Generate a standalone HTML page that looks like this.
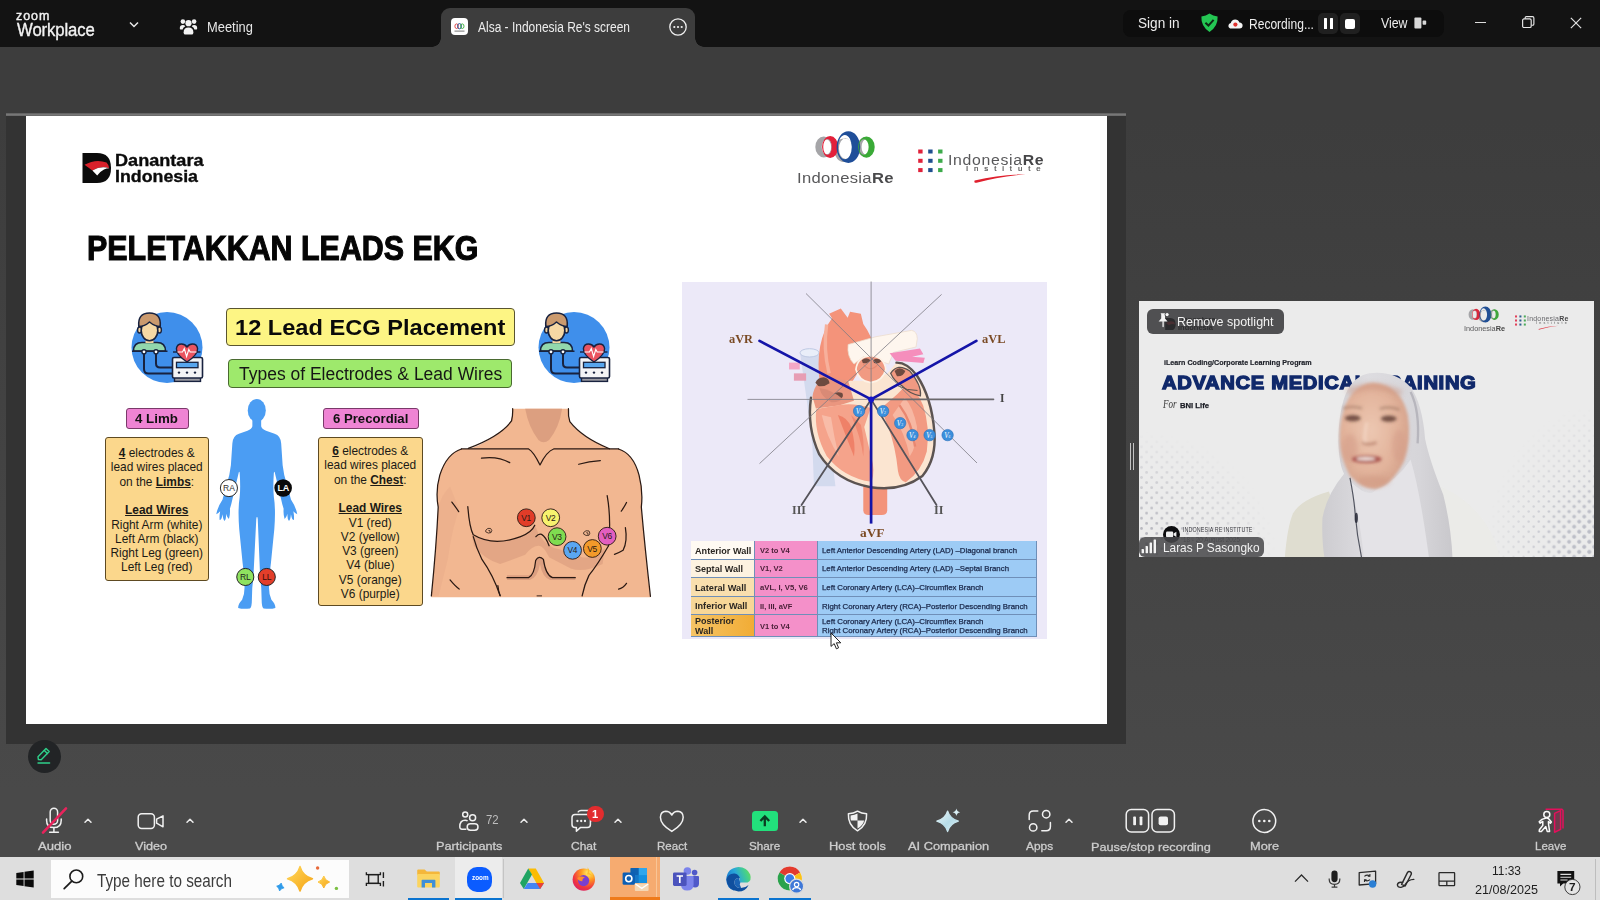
<!DOCTYPE html>
<html>
<head>
<meta charset="utf-8">
<title>Zoom Workplace</title>
<style>
*{box-sizing:border-box;margin:0;padding:0}
html,body{width:1600px;height:900px;overflow:hidden;background:#3d3d3d;font-family:"Liberation Sans",sans-serif;}
#root{filter:opacity(1);position:relative;width:1600px;height:900px;overflow:hidden;background:linear-gradient(#3d3d3d 0,#3d3d3d 120px,#494949 790px,#494949 100%);}
.abs{position:absolute}
/* ---------- title bar ---------- */
#titlebar{position:absolute;left:0;top:0;width:1600px;height:47px;background:#131313;color:#fff}
.t{position:absolute;white-space:nowrap;transform:scaleX(var(--k,1));transform-origin:0 50%}
#titlebar .t{color:#f2f2f2}
#tab{position:absolute;left:441px;top:8px;width:254px;height:39px;background:#3d3d3d;border-radius:9px 9px 0 0}
#tab:before,#tab:after{content:"";position:absolute;bottom:0;width:9px;height:9px}
#tab:before{left:-9px;background:radial-gradient(circle at 0 0,transparent 8.5px,#3d3d3d 9px)}
#tab:after{right:-9px;background:radial-gradient(circle at 100% 0,transparent 8.5px,#3d3d3d 9px)}
#pill{position:absolute;left:1123px;top:10px;width:321px;height:27px;border-radius:8px;background:#0d0d0d}
/* ---------- share area ---------- */
#share{position:absolute;left:6px;top:113px;width:1120px;height:631px;background:#333}
#share .topline{position:absolute;left:0;top:0;width:1120px;height:3px;background:linear-gradient(#5a5a5a,#777 50%,#666)}
#slide{position:absolute;left:20px;top:3px;width:1081px;height:608px;background:#fff;overflow:hidden}
.ob{background:#fbd78c;border:1.2px solid #5e4a22;border-radius:3px}
.otx{font-size:11.9px;line-height:14.3px;text-align:center;color:#1c1a16;white-space:nowrap}
.otx b{font-weight:bold}
.ll{font-family:"Liberation Serif",serif;font-weight:bold;font-size:11.6px;line-height:16px;color:#7a4a24}
.tc1{font-size:9.6px;line-height:12px;font-weight:bold;color:#2a2622}
.tc2{font-size:7.2px;line-height:12px;font-weight:bold;color:#4a2038}
.tc3{font-size:7.2px;line-height:12px;color:#1c2a4c;-webkit-text-stroke:.25px #1c2a4c}
/* ---------- video ---------- */
#video{position:absolute;left:1139px;top:301px;width:455px;height:256px;background:#ebebeb;overflow:hidden}
/* ---------- toolbar ---------- */
#toolbar{position:absolute;left:0;top:790px;width:1600px;height:67px}
.tb{position:absolute;top:0;height:67px;color:#d6d6d6;font-size:13px;text-align:center}
.tb .lbl{position:absolute;left:50%;transform:translateX(-50%);top:47px;white-space:nowrap;color:#d2d2d2;font-size:13.5px;letter-spacing:.1px}
.tb svg{position:absolute}
.lb{font-size:11.7px;line-height:14px;color:#cdcdcd;-webkit-text-stroke:.3px #cdcdcd}
/* ---------- taskbar ---------- */
#taskbar{position:absolute;left:0;top:857px;width:1600px;height:43px;background:#dedede}
</style>
</head>
<body>
<div id="root">

<!-- TITLEBAR -->
<div id="titlebar">
  <div class="t" style="left:16px;top:8.5px;font-size:12px;letter-spacing:.9px;line-height:14px;-webkit-text-stroke:.4px #f2f2f2;--k:1.04">zoom</div>
  <div class="t" style="left:16.5px;top:19.5px;font-size:17.5px;line-height:20px;letter-spacing:-.1px;-webkit-text-stroke:.35px #f2f2f2;--k:.955">Workplace</div>
  <svg class="abs" style="left:128px;top:20px" width="12" height="10" viewBox="0 0 12 10"><path d="M2 2.5 L6 6.5 L10 2.5" fill="none" stroke="#e8e8e8" stroke-width="1.5"/></svg>
  <!-- meeting icon -->
  <svg class="abs" style="left:179px;top:17px" width="19" height="19" viewBox="0 0 19 19"><g fill="#f2f2f2"><circle cx="9.5" cy="6.2" r="3.1"/><circle cx="3.9" cy="4.6" r="2.3"/><circle cx="15.1" cy="4.6" r="2.3"/><path d="M0.8 11.2 Q0.8 8 3.9 8 Q5.5 8 6.3 9.2 Q3.8 10.3 3.6 12.6 L1.6 12.6 Q0.8 12.6 0.8 11.2Z"/><path d="M18.2 11.2 Q18.2 8 15.1 8 Q13.5 8 12.7 9.2 Q15.2 10.3 15.4 12.6 L17.4 12.6 Q18.2 12.6 18.2 11.2Z"/><path d="M4.6 15.4 Q4.6 10.4 9.5 10.4 Q14.4 10.4 14.4 15.4 Q14.4 17.6 12.6 17.6 L6.4 17.6 Q4.6 17.6 4.6 15.4Z"/></g></svg>
  <div class="t" style="left:207px;top:18px;font-size:14px;line-height:18px;color:#e6e6e6;--k:.92">Meeting</div>
  <div id="tab">
    <div class="abs" style="left:10px;top:10px;width:17px;height:17px;border-radius:4px;background:#fff"></div>
    <svg class="abs" style="left:10px;top:10px" width="17" height="17" viewBox="0 0 17 17"><ellipse cx="5.6" cy="8.2" rx="1.7" ry="2.3" fill="none" stroke="#d33" stroke-width=".9"/><ellipse cx="8.5" cy="8.2" rx="1.9" ry="2.6" fill="none" stroke="#25509a" stroke-width="1"/><ellipse cx="11.3" cy="8.2" rx="1.7" ry="2.3" fill="none" stroke="#3a3" stroke-width=".9"/><rect x="3.5" y="12.6" width="10" height="1" fill="#777"/></svg>
    <div class="t" style="left:37px;top:10px;font-size:14px;line-height:18px;color:#ededed;--k:.855">Alsa - Indonesia Re's screen</div>
    <svg class="abs" style="left:227px;top:9px" width="20" height="20" viewBox="0 0 20 20"><circle cx="10" cy="10" r="8.2" fill="none" stroke="#f0f0f0" stroke-width="1.3"/><circle cx="6.3" cy="10" r="1.1" fill="#f0f0f0"/><circle cx="10" cy="10" r="1.1" fill="#f0f0f0"/><circle cx="13.7" cy="10" r="1.1" fill="#f0f0f0"/></svg>
  </div>
  <div id="pill">
    <div class="t" style="left:15px;top:4px;font-size:15px;line-height:18px;color:#ededed;--k:.906">Sign in</div>
    <svg class="abs" style="left:77px;top:3px" width="19" height="20" viewBox="0 0 19 20"><path d="M9.5 .6 Q13 3 17.6 3.6 Q18.2 13.5 9.5 19 Q.8 13.5 1.4 3.6 Q6 3 9.5 .6Z" fill="#24c653"/><path d="M5.4 9.8 L8.4 12.6 L13.6 6.8" fill="none" stroke="#0e2a15" stroke-width="2"/></svg>
    <svg class="abs" style="left:105px;top:9px" width="15" height="10" viewBox="0 0 15 10"><path d="M3.6 9.6 Q.4 9.6 .4 6.8 Q.4 4.4 2.8 4 Q3.6 .4 7.2 .4 Q10.4 .4 11.4 3.4 Q14.6 3.6 14.6 6.6 Q14.6 9.6 11.4 9.6Z" fill="#f4f4f4"/><circle cx="7.4" cy="5.6" r="2.1" fill="#e0332f"/></svg>
    <div class="t" style="left:125.5px;top:5px;font-size:14px;line-height:18px;color:#ededed;--k:.86">Recording...</div>
    <div class="abs" style="left:195px;top:3px;width:20px;height:21px;border-radius:5px;background:#202020"></div>
    <div class="abs" style="left:217px;top:3px;width:20px;height:21px;border-radius:5px;background:#202020"></div>
    <div class="abs" style="left:201px;top:8px;width:3px;height:11px;background:#fff;border-radius:.5px"></div>
    <div class="abs" style="left:206.5px;top:8px;width:3px;height:11px;background:#fff;border-radius:.5px"></div>
    <div class="abs" style="left:221.5px;top:8.5px;width:10.5px;height:10px;background:#fff;border-radius:2px"></div>
    <div class="t" style="left:257.5px;top:4px;font-size:14px;line-height:18px;color:#ededed;--k:.88">View</div>
    <svg class="abs" style="left:291px;top:7px" width="13" height="12" viewBox="0 0 13 12"><rect x=".4" y=".4" width="7" height="11" rx="1" fill="#d8d8d8"/><rect x="8.6" y="3.6" width="3.6" height="4.2" rx=".8" fill="#d8d8d8"/></svg>
  </div>
  <!-- window controls -->
  <div class="abs" style="left:1474.5px;top:22px;width:11.5px;height:1.2px;background:#dcdcdc"></div>
  <svg class="abs" style="left:1522px;top:16px" width="12.5" height="12.5" viewBox="0 0 14 14"><rect x=".7" y="3.3" width="9.6" height="9.6" rx="1.5" fill="none" stroke="#e8e8e8" stroke-width="1.3"/><path d="M3.6 3.2 V2.2 Q3.6 .7 5.1 .7 H11.8 Q13.3 .7 13.3 2.2 V8.9 Q13.3 10.4 11.8 10.4 H10.6" fill="none" stroke="#e8e8e8" stroke-width="1.3"/></svg>
  <svg class="abs" style="left:1570px;top:16.5px" width="12" height="12" viewBox="0 0 14 14"><path d="M1 1 L13 13 M13 1 L1 13" stroke="#e0e0e0" stroke-width="1.4"/></svg>
</div>

<!-- SHARE -->
<div id="share">
  <div class="topline"></div>
  <div id="slide"><div id="pg" style="position:absolute;left:-26px;top:-116px;width:1600px;height:900px">

<!-- Danantara logo -->
<svg class="abs" style="left:82px;top:153px" width="30" height="30" viewBox="0 0 30 30"><path d="M.5 0 H15 Q29 0 29 15 Q29 30 15 30 H.5Z" fill="#0b0b0b"/><path d="M2.5 11.8 Q14 5.5 24.5 9.6 Q26.8 11.8 27.2 15.2 Q19 12.4 10.4 17.4Z" fill="#d8202a"/><path d="M10.4 17.4 Q19 12.4 27.2 15.2 Q24.5 15.3 22 16.4 Q18 18.4 15.2 22.4Z" fill="#fff"/></svg>
<div class="t s" style="left:114.5px;top:150.7px;font-size:17px;line-height:20px;font-weight:bold;color:#0b0b0b;-webkit-text-stroke:.35px #0b0b0b;--w:88.5;--k:1.0645">Danantara</div>
<div class="t s" style="left:114.5px;top:166.9px;font-size:17px;line-height:20px;font-weight:bold;color:#0b0b0b;-webkit-text-stroke:.35px #0b0b0b;--w:83;--k:1.0459">Indonesia</div>
<!-- title -->
<div class="t s" id="ttl" style="left:87.2px;top:228.3px;font-size:35px;line-height:40px;font-weight:bold;color:#050505;-webkit-text-stroke:1.1px #050505;--w:391.5;--k:0.8690">PELETAKKAN LEADS EKG</div>
<!-- yellow & green boxes -->
<div class="abs" style="left:225.5px;top:307.5px;width:289px;height:38px;background:#fdf584;border:1.2px solid #5a5530;border-radius:4px"></div>
<div class="t s" style="left:234.5px;top:314.3px;font-size:22.5px;line-height:28px;font-weight:bold;color:#0a0a0a;--w:270.3;--k:1.0493">12 Lead ECG Placement</div>
<div class="abs" style="left:228px;top:359px;width:283.5px;height:28.5px;background:#9ee96c;border:1.2px solid #4a6a30;border-radius:4px"></div>
<div class="t s" style="left:238.5px;top:363px;font-size:18px;line-height:22px;color:#161616;--w:263.3;--k:0.9711">Types of Electrodes &amp; Lead Wires</div>
<!-- monitor icons -->
<svg width="0" height="0" style="position:absolute"><defs><g id="ecgico">
<circle cx="42" cy="47.5" r="35.5" fill="#3f8feb"/>
<path d="M8.5 51 Q8.5 42.5 17 42.5 H32 Q40.5 42.5 40.5 51Z" fill="#92d8ac" stroke="#18223f" stroke-width="1.6" stroke-linejoin="round"/>
<path d="M7 51.3 H42.5" stroke="#18223f" stroke-width="1.6"/>
<path d="M20.5 38 V43 H28.5 V38Z" fill="#f3d4a0"/>
<ellipse cx="14.6" cy="30" rx="2" ry="3" fill="#f3d4a0" stroke="#18223f" stroke-width="1.4"/><ellipse cx="34.4" cy="30" rx="2" ry="3" fill="#f3d4a0" stroke="#18223f" stroke-width="1.4"/>
<ellipse cx="24.5" cy="30.5" rx="8.3" ry="10.3" fill="#f6d8a4" stroke="#18223f" stroke-width="1.6"/>
<path d="M13.8 26.5 Q12.5 13 24.5 13 Q36.5 13 35.2 26.5 Q30 26.5 24.5 22 Q19.5 26.5 13.8 26.5Z" fill="#cb9a6e" stroke="#18223f" stroke-width="1.6" stroke-linejoin="round"/>
<path d="M19 53 V69 Q19 73.5 23.5 73.5 H48" fill="none" stroke="#18223f" stroke-width="2"/>
<path d="M31 53 V63.5 Q31 67.5 35 67.5 H48" fill="none" stroke="#18223f" stroke-width="2"/>
<circle cx="19" cy="51.8" r="2.1" fill="#fff" stroke="#18223f" stroke-width="1.4"/><circle cx="31" cy="51.8" r="2.1" fill="#fff" stroke="#18223f" stroke-width="1.4"/>
<rect x="49.5" y="77" width="26" height="4.4" fill="#9a9aa2" stroke="#18223f" stroke-width="1.4"/>
<rect x="47.5" y="57.5" width="30" height="20.5" rx="1.5" fill="#f4f4f6" stroke="#18223f" stroke-width="1.6"/>
<rect x="51.5" y="62.3" width="21.5" height="5.4" fill="#58a6ee" stroke="#18223f" stroke-width="1.3"/>
<circle cx="54" cy="72.6" r="1.2" fill="#18223f"/><circle cx="62" cy="72.6" r="1.2" fill="#18223f"/><circle cx="70" cy="72.6" r="1.2" fill="#18223f"/>
<path d="M48 52 H75.5" stroke="#18223f" stroke-width="1.4"/>
<path d="M62 62 Q51 54.5 51.4 48.6 Q52 44 56.5 44 Q60 44 62 47 Q64 44 67.5 44 Q72 44 72.6 48.6 Q73 54.5 62 62Z" fill="#ea5460" stroke="#18223f" stroke-width="1.4" stroke-linejoin="round"/>
<path d="M52.5 52 H57.5 L59.3 48.5 L61.6 56.5 L63.8 49.5 L65.2 52 H71.5" fill="none" stroke="#fff" stroke-width="1.1"/>
</g></defs></svg>
<svg class="abs" style="left:125px;top:300px" width="90" height="90" viewBox="0 0 90 90"><use href="#ecgico"/></svg>
<svg class="abs" style="left:531.5px;top:300px" width="90" height="90" viewBox="0 0 90 90"><use href="#ecgico"/></svg>
<!-- pink labels -->
<div class="abs" style="left:125.5px;top:407.5px;width:63px;height:21.5px;background:#ef84d4;border:1px solid #7a3a6a;border-radius:3px"></div>
<div class="t s" style="left:135px;top:409.5px;font-size:13.2px;line-height:18px;font-weight:bold;color:#111;--w:42.8;--k:1.0071">4 Limb</div>
<div class="abs" style="left:322.5px;top:407.5px;width:96.5px;height:21.5px;background:#ef84d4;border:1px solid #7a3a6a;border-radius:3px"></div>
<div class="t s" style="left:332.5px;top:409.5px;font-size:13.2px;line-height:18px;font-weight:bold;color:#111;--w:75.3;--k:0.9974">6 Precordial</div>
<!-- orange boxes -->
<div class="abs ob" style="left:104.5px;top:437px;width:104.5px;height:144px"></div>
<div class="abs ob" style="left:318px;top:437px;width:104.5px;height:168.5px"></div>
<div class="abs otx" style="left:104.5px;top:446.1px;width:104.5px"><u><b>4</b></u> electrodes &amp;<br>lead wires placed<br>on the <u><b>Limbs</b></u>:<br><br><u><b>Lead Wires</b></u><br>Right Arm (white)<br>Left Arm (black)<br>Right Leg (green)<br>Left Leg (red)</div>
<div class="abs otx" style="left:318px;top:444.1px;width:104.5px"><u><b>6</b></u> electrodes &amp;<br>lead wires placed<br>on the <u><b>Chest</b></u>:<br><br><u><b>Lead Wires</b></u><br>V1 (red)<br>V2 (yellow)<br>V3 (green)<br>V4 (blue)<br>V5 (orange)<br>V6 (purple)</div>
<svg class="abs" style="left:205px;top:392px" width="105" height="220" viewBox="0 0 430 900">
<g fill="#4b9df3">
<ellipse cx="212" cy="75" rx="37" ry="47"/>
<path d="M194 108 H230 V140 Q232 152 250 158 L285 170 Q310 178 312 210 L318 300 Q322 340 336 380 L352 440 Q372 470 378 500 Q372 500 362 488 Q366 510 364 524 Q356 524 352 500 Q350 522 344 528 Q336 520 338 498 Q332 516 326 520 Q320 500 322 478 Q316 460 312 440 L286 330 Q284 322 282 330 Q278 390 282 430 Q290 480 284 560 Q276 640 270 700 Q262 760 262 800 Q262 830 272 850 Q290 870 288 884 Q270 890 240 886 Q232 880 232 850 Q232 800 226 760 L216 520 Q213 500 210 520 L198 760 Q192 800 192 850 Q192 880 184 886 Q154 890 136 884 Q134 870 152 850 Q162 830 162 800 Q162 760 154 700 Q148 640 140 560 Q134 480 142 430 Q146 390 142 330 Q140 322 138 330 L112 440 Q108 460 102 478 Q104 500 98 520 Q92 516 86 498 Q88 520 80 528 Q74 522 72 500 Q68 524 60 524 Q58 510 62 488 Q52 500 46 500 Q52 470 72 440 L88 380 Q102 340 106 300 L112 210 Q114 178 139 170 L174 158 Q192 152 194 140Z"/>
</g>
<circle cx="98" cy="393" r="35" fill="#fff" stroke="#222" stroke-width="4"/>
<circle cx="320" cy="393" r="36" fill="#0a0a0a"/>
<circle cx="165" cy="757" r="35" fill="#8fe260" stroke="#222" stroke-width="4"/>
<circle cx="253" cy="757" r="35" fill="#e23e2a" stroke="#222" stroke-width="4"/>
<g font-family="Liberation Sans, sans-serif" font-size="35" text-anchor="middle">
<text x="98" y="405" fill="#333">RA</text>
<text x="320" y="405" fill="#fff" font-weight="bold" font-size="37" letter-spacing="-2">LA</text>
<text x="165" y="769" fill="#222" letter-spacing="-1">RL</text>
<text x="253" y="769" fill="#3a0d08" letter-spacing="-1">LL</text>
</g>
</svg>
<svg class="abs" style="left:425px;top:400px" width="235" height="205" viewBox="0 0 1032 900">
<defs><clipPath id="tcl"><rect x="0" y="0" width="1032" height="866"/></clipPath></defs>
<g clip-path="url(#tcl)">
<path id="tbody" d="M385 38 H630 V70 Q632 100 660 125 Q730 185 812 215 H850 Q915 235 940 330 Q958 400 950 470 Q965 640 990 870 L990 900 H25 L28 870 Q50 640 58 470 Q45 400 65 330 Q95 235 160 215 H195 Q280 185 352 125 Q380 100 382 70Z" fill="#f2b791"/>
<path d="M440 38 H602 Q590 120 545 175 Q520 195 498 175 Q455 120 440 38Z" fill="#dc9f80"/>
<path d="M205 590 Q300 640 420 600 Q470 580 482 548 L500 590 Q540 650 590 655 L690 690 Q740 700 790 650 L780 720 Q700 760 640 740 L545 690 Q520 640 500 640 Q470 640 440 680 L330 720 Q260 700 215 640Z" fill="#e0a382" opacity=".85"/>
<path d="M360 770 H455 Q480 760 485 700 Q500 680 520 700 Q530 765 560 775 H660 L660 790 H550 Q515 780 505 720 Q495 780 460 790 H360Z" fill="#dc9f80"/>
<path d="M60 470 Q70 420 110 380 L150 480 Q120 560 100 700 L60 860 L30 860Z" fill="#eaae8a" opacity=".6"/>
<g fill="none" stroke="#2a1913" stroke-width="5.5" stroke-linecap="round" stroke-linejoin="round">
<path d="M385 38 Q386 70 380 92 Q330 160 190 212"/>
<path d="M630 38 Q628 70 636 95 Q690 165 810 214"/>
<path d="M160 215 H455 Q475 225 505 285 Q535 225 565 215 H850"/>
<path d="M160 215 Q95 235 65 330 Q45 400 58 470 Q50 640 28 860"/>
<path d="M850 215 Q915 235 940 330 Q958 400 950 470 Q965 640 990 862"/>
<path d="M248 255 Q320 245 372 275"/>
<path d="M675 282 Q720 270 770 266"/>
<path d="M188 468 Q195 560 212 592 Q300 645 420 600 Q470 580 482 550"/>
<path d="M487 600 Q500 585 512 590 Q530 600 545 640"/>
<path d="M800 420 Q818 520 806 640"/>
<path d="M118 448 Q135 470 148 490"/>
<path d="M885 450 Q875 470 862 488"/>
<path d="M880 560 Q890 620 870 660 Q850 672 832 678"/>
<path d="M212 600 Q225 650 250 700 Q300 770 330 860"/>
<path d="M806 640 Q760 720 720 770 Q700 810 690 860"/>
<path d="M360 780 H455 Q480 770 486 705 Q500 680 520 700 Q530 770 560 780 H660"/>
<path d="M320 815 Q322 840 330 858"/>
<path d="M110 790 Q135 820 150 830"/>
<path d="M850 830 Q870 826 885 805"/>
<path d="M268 570 Q275 560 288 564 Q298 572 290 582 Q278 588 268 580Z M280 572 Q288 570 286 580" stroke-width="3.5"/>
<path d="M698 580 Q706 570 720 575 Q728 585 720 594 Q706 598 698 590Z M710 582 Q718 580 716 590" stroke-width="3.5"/>
<path d="M492 860 H512" stroke-width="4"/>
</g>
</g>
<g stroke="#2a1913" stroke-width="4">
<circle cx="445" cy="517" r="39" fill="#e13c28"/>
<circle cx="552" cy="517" r="39" fill="#f7f26e"/>
<circle cx="580" cy="600" r="39" fill="#7fdc50"/>
<circle cx="648" cy="660" r="39" fill="#5aa7f2"/>
<circle cx="735" cy="652" r="39" fill="#f29a2a"/>
<circle cx="800" cy="598" r="39" fill="#e25fc0"/>
</g>
<g font-family="Liberation Sans, sans-serif" font-size="37" text-anchor="middle" fill="#2a1913" letter-spacing="-1.5">
<text x="444" y="531">V1</text><text x="551" y="531">V2</text><text x="579" y="614">V3</text><text x="647" y="674">V4</text><text x="734" y="666">V5</text><text x="799" y="612">V6</text>
</g>
</svg>



<!-- IndonesiaRe logo -->
<svg class="abs" style="left:790px;top:125px" width="135" height="45" viewBox="0 0 800 266.7">
<path fill-rule="evenodd" fill="#a5a5a8" d="M150 130a50 62 0 1 0 100 0a50 62 0 1 0 -100 0Z M188 130a28 44 0 1 0 56 0a28 44 0 1 0 -56 0Z"/>
<path fill-rule="evenodd" fill="#a5a5a8" d="M262 150a60 70 0 1 0 120 0a60 70 0 1 0 -120 0Z M290 140a40 62 0 1 0 80 0a40 62 0 1 0 -80 0Z"/>
<path fill-rule="evenodd" fill="#a5a5a8" d="M398 131a46 58 0 1 0 92 0a46 58 0 1 0 -92 0Z M424 131a28 46 0 1 0 56 0a28 46 0 1 0 -56 0Z"/>
<path fill-rule="evenodd" fill="#e3203a" d="M190 130a48 65 0 1 0 96 0a48 65 0 1 0 -96 0Z M197 130a25 47 0 1 0 50 0a25 47 0 1 0 -50 0Z"/>
<path fill-rule="evenodd" fill="#1f4e99" d="M276 131a70 94 0 1 0 140 0a70 94 0 1 0 -140 0Z M284 131a41 72 0 1 0 82 0a41 72 0 1 0 -82 0Z"/>
<path fill-rule="evenodd" fill="#3aaa37" d="M404 131a49 63 0 1 0 98 0a49 63 0 1 0 -98 0Z M409 131a28.5 46 0 1 0 57 0a28.5 46 0 1 0 -57 0Z"/>
</svg>
<div class="t" style="left:797px;top:168.4px;font-size:15.5px;line-height:20px;letter-spacing:.3px;color:#58585a;--w:96.8;--k:1.0713">Indonesia<b style="color:#4a4a4c">Re</b></div>
<!-- Institute logo -->
<svg class="abs" style="left:917.8px;top:148.8px" width="25" height="24" viewBox="0 0 25 24"><g fill="#e0213a"><rect x="0.2" y="0.5" width="4.4" height="4"/><rect x="0.2" y="9.8" width="4.4" height="4"/><rect x="0.2" y="19.1" width="4.4" height="4"/></g><g fill="#1f4f8f"><rect x="10.2" y="0.5" width="4.4" height="4"/><rect x="10.2" y="9.8" width="4.4" height="4"/><rect x="10.2" y="19.1" width="4.4" height="4"/></g><g fill="#3caa4a"><rect x="20.1" y="0.5" width="4.4" height="4"/><rect x="20.1" y="9.8" width="4.4" height="4"/><rect x="20.1" y="19.1" width="4.4" height="4"/></g></svg>
<div class="t" style="left:947.8px;top:150.8px;font-size:14px;line-height:18px;letter-spacing:.6px;color:#58585a;--w:96.2;--k:1.1287">Indonesia<b style="color:#454547">Re</b></div>
<div class="t" style="left:965.5px;top:164px;font-size:7.5px;line-height:10px;color:#555;letter-spacing:5.6px;-webkit-text-stroke:.2px #555;--w:80.5;--k:1.0499">Institute</div>
<svg class="abs" style="left:970px;top:170px" width="60" height="16" viewBox="0 0 60 16"><path d="M4.6 10.6 Q3.6 13 6.6 12.8 Q28 7 55.6 4.2 Q30 4.6 4.6 10.6Z" fill="#e0202e"/></svg>
<!-- heart panel -->
<div class="abs" style="left:682px;top:282px;width:365px;height:356.5px;background:#ece9f8"></div>
<svg class="abs" style="left:790px;top:300px;overflow:visible" width="160" height="220" viewBox="0 0 655 900">
<!-- vena cava -->
<path d="M42 222 L70 420 L92 600 L98 762 H186 L162 560 L132 400 L118 222Z" fill="#d3daee"/>
<ellipse cx="80" cy="216" rx="39" ry="17" fill="#e9eef9" stroke="#bcc8e2" stroke-width="4"/>
<path d="M-4 256 H40 V284 H-4Z" fill="#f4a8c6"/><path d="M16 300 H66 V330 H16Z" fill="#e79db4"/>
<!-- descending aorta -->
<path d="M300 750 H398 V862 Q396 880 376 880 H322 Q302 880 300 862Z" fill="#f3937a"/>
<!-- aorta -->
<path d="M122 340 Q100 170 172 74 L160 56 L208 34 L236 72 L246 48 L290 56 L300 98 Q338 150 346 205 L300 262 L256 332 L200 400Z" fill="#f4937a"/>
<path d="M150 100 Q135 200 160 300" fill="none" stroke="#f7b09b" stroke-width="14"/>
<!-- pulmonary artery -->
<path d="M238 182 L352 150 L498 124 Q520 128 521 158 L516 192 L424 214 L404 262 L372 250 L300 232 L262 262 Q232 232 238 182Z" fill="#fef6ee" stroke="#ecdccb" stroke-width="3"/>
<!-- right pink veins -->
<path d="M408 218 L532 198 L546 222 L500 232 L552 236 L546 258 L432 248Z" fill="#f58ebc"/>
<!-- heart body -->
<path d="M86 400 Q68 520 120 632 Q190 742 330 766 Q452 786 542 720 Q600 650 591 540 Q580 400 520 310 Q480 255 436 256 L400 300 L340 330 L200 330 Q130 336 86 400Z" fill="#fbe5d1"/>
<!-- right atrium -->
<path d="M92 396 Q100 330 160 314 L238 330 L262 412 L200 432 L106 444Z" fill="#ea967f"/>
<path d="M104 338 Q112 318 138 316 Q160 320 162 340 Q140 356 116 352Z" fill="#6d4a40"/>
<path d="M164 388 Q190 372 214 380 Q222 396 206 404 Q182 402 164 388Z" fill="#6d4a40"/>
<path d="M120 360 Q170 366 214 404 Q200 420 170 418 Q130 400 120 360Z" fill="#d98a76"/>
<!-- RV -->
<path d="M108 446 Q96 540 150 638 Q220 728 334 744 Q350 700 332 640 L304 520 L330 442 Q260 420 204 430Z" fill="#f5a38b"/>
<path d="M196 470 Q230 560 262 640 Q270 590 250 520 Q236 480 196 470Z" fill="#ef8168"/>
<path d="M250 470 Q290 560 300 640 Q306 580 290 510Z" fill="#f08a72"/>
<path d="M130 470 Q150 560 200 640 Q180 560 168 480Z" fill="#f8bca8"/>
<!-- LV -->
<path d="M372 444 L402 520 Q432 600 442 700 Q448 740 474 746 Q540 700 560 620 Q574 520 545 432 Q520 370 482 342 L440 384Z" fill="#f29a82"/>
<path d="M420 470 Q470 540 490 640 Q520 600 520 520 Q505 440 470 400Z" fill="#f7b7a2"/>
<path d="M448 430 Q500 500 512 600" fill="none" stroke="#e98770" stroke-width="10"/>
<!-- pulmonary valve -->
<path d="M270 284 Q276 232 330 228 Q386 232 392 284 Q380 332 330 338 Q282 332 270 284Z" fill="#f19a82" stroke="#fdf2e6" stroke-width="7"/>
<path d="M294 246 Q312 230 330 246 Q318 262 298 258Z M340 246 Q360 232 374 250 Q360 264 344 258Z" fill="#6d4a40"/>
<path d="M300 262 Q330 300 360 262" fill="none" stroke="#e58a72" stroke-width="5"/>
<!-- left atrium -->
<path d="M412 300 Q440 256 490 290 Q540 350 534 392 Q490 384 460 352 Q428 336 412 300Z" fill="#f19a82" stroke="#5b5351" stroke-width="5"/>
<path d="M428 290 Q448 268 472 290 Q464 314 438 312Z" fill="#6d4a40"/>
<path d="M440 350 Q480 372 522 370" fill="none" stroke="#5b5351" stroke-width="4"/>
<!-- outline -->
<path d="M86 400 Q68 520 120 632 Q190 742 330 766 Q452 786 542 720 Q600 650 591 540 Q580 400 520 310 Q480 255 436 256" fill="none" stroke="#5b5351" stroke-width="10" stroke-linecap="round"/>
</svg>
<svg class="abs" style="left:740px;top:280px" width="270" height="270" viewBox="0 0 900 900">
<g stroke="#7c7a82" stroke-width="2.9" fill="none" opacity=".9">
<path d="M437 5 V398"/><path d="M220 45 L790 610"/><path d="M672 48 L65 612"/><path d="M25 398 H437"/>
</g>
<g fill="none" stroke-linecap="round">
<path d="M437 398 H845" stroke="#6a686c" stroke-width="5.5"/>
<path d="M437 398 L655 750" stroke="#55535a" stroke-width="6"/>
<path d="M437 398 L205 750" stroke="#55535a" stroke-width="6"/>
<path d="M65 203 L437 398 L788 203" stroke="#1414a8" stroke-width="9" stroke-linejoin="round"/>
<path d="M437 398 V812" stroke="#1414a8" stroke-width="9" stroke-linecap="butt"/>
</g>
<circle cx="437" cy="398" r="10" fill="#1414c8"/>
<g fill="#3b8fdc" stroke="#2a6fb8" stroke-width="2">
<circle cx="397" cy="437" r="19"/><circle cx="477" cy="437" r="19"/><circle cx="534" cy="477" r="19"/><circle cx="575" cy="517" r="19"/><circle cx="632" cy="517" r="19"/><circle cx="692" cy="517" r="19"/>
</g>
<g font-family="Liberation Serif, serif" font-style="italic" font-size="24" fill="#fff" text-anchor="middle">
<text x="396" y="445">V<tspan font-size="12" dy="3">1</tspan></text><text x="476" y="445">V<tspan font-size="12" dy="3">2</tspan></text><text x="533" y="485">V<tspan font-size="12" dy="3">3</tspan></text><text x="574" y="525">V<tspan font-size="12" dy="3">4</tspan></text><text x="631" y="525">V<tspan font-size="12" dy="3">5</tspan></text><text x="691" y="525">V<tspan font-size="12" dy="3">6</tspan></text>
</g>
</svg>
<!-- lead labels -->
<div class="t ll" style="left:729px;top:332px;--w:24;--k:1.0644">aVR</div>
<div class="t ll" style="left:982px;top:332px;--w:23.4;--k:1.0682">aVL</div>
<div class="t ll" style="left:1000px;top:391px;color:#444;--w:4.5;--k:0.9965">I</div>
<div class="t ll" style="left:791.5px;top:503px;color:#555;--w:14;--k:1.0334">III</div>
<div class="t ll" style="left:933.5px;top:503px;color:#555;--w:9.5;--k:1.0519">II</div>
<div class="t ll" style="left:859.5px;top:526px;--w:24.4;--k:1.1474">aVF</div>
<!-- table -->
<div class="abs" style="left:690.8px;top:540.8px;width:346.1px;height:96.3px;background:#6f8fb8"></div>
<div class="abs" style="left:691.4px;top:541.4px;width:63.0px;height:17.3px;background:#fffaf3"></div>
<div class="abs" style="left:755.3px;top:541.4px;width:62.2px;height:17.3px;background:#f490c9"></div>
<div class="abs" style="left:818.4px;top:541.4px;width:217.9px;height:17.3px;background:#9dcbf5"></div>
<div class="abs" style="left:691.4px;top:559.6px;width:63.0px;height:17.8px;background:#fdf2e0"></div>
<div class="abs" style="left:755.3px;top:559.6px;width:62.2px;height:17.8px;background:#f490c9"></div>
<div class="abs" style="left:818.4px;top:559.6px;width:217.9px;height:17.8px;background:#9dcbf5"></div>
<div class="abs" style="left:691.4px;top:578.3px;width:63.0px;height:17.8px;background:#f9dfae"></div>
<div class="abs" style="left:755.3px;top:578.3px;width:62.2px;height:17.8px;background:#f490c9"></div>
<div class="abs" style="left:818.4px;top:578.3px;width:217.9px;height:17.8px;background:#9dcbf5"></div>
<div class="abs" style="left:691.4px;top:597.0px;width:63.0px;height:17.4px;background:#f8d797"></div>
<div class="abs" style="left:755.3px;top:597.0px;width:62.2px;height:17.4px;background:#f490c9"></div>
<div class="abs" style="left:818.4px;top:597.0px;width:217.9px;height:17.4px;background:#9dcbf5"></div>
<div class="abs" style="left:691.4px;top:615.3px;width:63.0px;height:20.3px;background:linear-gradient(90deg,#f6c466,#f1ac35)"></div>
<div class="abs" style="left:755.3px;top:615.3px;width:62.2px;height:20.3px;background:#f490c9"></div>
<div class="abs" style="left:818.4px;top:615.3px;width:217.9px;height:20.3px;background:#9dcbf5"></div>
<div class="t tc1" style="left:695.3px;top:544.5px;--w:56.3;--k:0.9487">Anterior Wall</div>
<div class="t tc1" style="left:695.3px;top:563.2px;--w:48.0;--k:0.9444">Septal Wall</div>
<div class="t tc1" style="left:695.3px;top:582.0px;--w:51.3;--k:0.9589">Lateral Wall</div>
<div class="t tc1" style="left:695.3px;top:600.2px;--w:52.4;--k:0.9511">Inferior Wall</div>
<div class="t tc1" style="left:695.3px;top:615.2px;--w:39.4;--k:0.9353">Posterior</div>
<div class="t tc1" style="left:695.3px;top:624.8px;--w:18.2;--k:0.9394">Wall</div>
<div class="t tc2" style="left:759.8px;top:544.7px;--w:29.7;--k:1.0467">V2 to V4</div>
<div class="t tc2" style="left:759.8px;top:563.4px;--w:22.8;--k:1.0566">V1, V2</div>
<div class="t tc2" style="left:759.8px;top:582.2px;--w:47.9;--k:1.0704">aVL, I, V5, V6</div>
<div class="t tc2" style="left:759.8px;top:600.6px;--w:32.4;--k:1.0399">II, III, aVF</div>
<div class="t tc2" style="left:759.8px;top:620.7px;--w:29.7;--k:1.0467">V1 to V4</div>
<div class="t tc3" style="left:821.9px;top:544.7px;--w:195.0;--k:1.0919">Left Anterior Descending Artery (LAD) –Diagonal branch</div>
<div class="t tc3" style="left:821.9px;top:563.4px;--w:187.0;--k:1.0911">Left Anterior Descending Artery (LAD) –Septal Branch</div>
<div class="t tc3" style="left:821.9px;top:582.2px;--w:161.5;--k:1.0927">Left Coronary Artery (LCA)–Circumflex Branch</div>
<div class="t tc3" style="left:821.9px;top:600.6px;--w:205.7;--k:1.0909">Right Coronary Artery (RCA)–Posterior Descending Branch</div>
<div class="t tc3" style="left:821.9px;top:616.1px;--w:161.5;--k:1.0927">Left Coronary Artery (LCA)–Circumflex Branch</div>
<div class="t tc3" style="left:821.9px;top:625.3px;--w:205.7;--k:1.0909">Right Coronary Artery (RCA)–Posterior Descending Branch</div>


<!-- mouse cursor -->
<svg class="abs" style="left:829.5px;top:631.5px" width="13" height="19" viewBox="0 0 13 19"><path d="M1 1 V14.4 L4.2 11.6 L6.4 16.8 L8.6 15.8 L6.4 10.8 H10.8Z" fill="#fff" stroke="#222" stroke-width="1" stroke-linejoin="round"/></svg>
  </div></div>
</div>

<!-- splitter grip -->
<div class="abs" style="left:1129.6px;top:443px;width:1.3px;height:27px;background:#c4c4c4"></div>
<div class="abs" style="left:1133px;top:443px;width:1.3px;height:27px;background:#c4c4c4"></div>
<!-- VIDEO -->
<div id="video"><div style="position:absolute;left:-1139px;top:-301px;width:1600px;height:900px">
<!-- halftone dots -->
<div class="abs" style="left:1139px;top:420px;width:150px;height:137px;background-image:radial-gradient(circle,#a4a4ae 0,#a4a4ae 1px,transparent 1.7px),radial-gradient(circle,#a4a4ae 0,#a4a4ae 1px,transparent 1.7px);background-size:10.2px 10.2px;background-position:-2.6px 1.4px,2.5px 6.5px;-webkit-mask-image:radial-gradient(ellipse 100% 100% at 0 100%,#000 0,rgba(0,0,0,.6) 40%,transparent 92%);mask-image:radial-gradient(ellipse 100% 100% at 0 100%,#000 0,rgba(0,0,0,.6) 40%,transparent 92%);opacity:.9"></div>
<div class="abs" style="left:1480px;top:400px;width:114px;height:157px;background-image:radial-gradient(circle,#b4b6c0 0,#b4b6c0 0.8px,transparent 1.5px),radial-gradient(circle,#b4b6c0 0,#b4b6c0 0.8px,transparent 1.5px);background-size:10.1px 10.1px;background-position:3.25px -4.55px,8.3px .5px;-webkit-mask-image:radial-gradient(ellipse 100% 100% at 100% 100%,#000 0,rgba(0,0,0,.7) 50%,transparent 96%);mask-image:radial-gradient(ellipse 100% 100% at 100% 100%,#000 0,rgba(0,0,0,.7) 50%,transparent 96%);opacity:.9"></div>
<div class="abs" style="left:1480px;top:400px;width:114px;height:157px;background-image:radial-gradient(circle,#b8bac4 0,#b8bac4 1.7px,transparent 2.4px),radial-gradient(circle,#b8bac4 0,#b8bac4 1.7px,transparent 2.4px);background-size:10.1px 10.1px;background-position:3.25px -4.55px,8.3px .5px;-webkit-mask-image:radial-gradient(ellipse 100% 100% at 100% 100%,#000 0,rgba(0,0,0,.8) 22%,transparent 50%);mask-image:radial-gradient(ellipse 100% 100% at 100% 100%,#000 0,rgba(0,0,0,.8) 22%,transparent 50%);opacity:.9"></div>
<!-- small logos -->
<svg class="abs" style="left:1466px;top:305px" width="36" height="20" viewBox="120 20 420 233"><path fill-rule="evenodd" fill="#a5a5a8" d="M150 130a50 62 0 1 0 100 0a50 62 0 1 0 -100 0Z M188 130a28 44 0 1 0 56 0a28 44 0 1 0 -56 0Z"/><path fill-rule="evenodd" fill="#a5a5a8" d="M262 150a60 70 0 1 0 120 0a60 70 0 1 0 -120 0Z M290 140a40 62 0 1 0 80 0a40 62 0 1 0 -80 0Z"/><path fill-rule="evenodd" fill="#a5a5a8" d="M398 131a46 58 0 1 0 92 0a46 58 0 1 0 -92 0Z M424 131a28 46 0 1 0 56 0a28 46 0 1 0 -56 0Z"/><path fill-rule="evenodd" fill="#d8283c" d="M190 130a48 65 0 1 0 96 0a48 65 0 1 0 -96 0Z M197 130a25 47 0 1 0 50 0a25 47 0 1 0 -50 0Z"/><path fill-rule="evenodd" fill="#214f95" d="M276 131a70 94 0 1 0 140 0a70 94 0 1 0 -140 0Z M284 131a41 72 0 1 0 82 0a41 72 0 1 0 -82 0Z"/><path fill-rule="evenodd" fill="#3fa63c" d="M404 131a49 63 0 1 0 98 0a49 63 0 1 0 -98 0Z M409 131a28.5 46 0 1 0 57 0a28.5 46 0 1 0 -57 0Z"/></svg>
<div class="t" style="left:1464px;top:323.5px;font-size:6.6px;line-height:9px;color:#58585a;--w:41;--k:1.1067">Indonesia<b style="color:#444">Re</b></div>
<svg class="abs" style="left:1515px;top:314.5px" width="11" height="11" viewBox="0 0 25 23"><g fill="#e0415a"><rect x="0" y="0" width="4.6" height="4.6"/><rect x="0" y="9.2" width="4.6" height="4.6"/><rect x="0" y="18.4" width="4.6" height="4.6"/></g><g fill="#2f5f8f"><rect x="10" y="0" width="4.6" height="4.6"/><rect x="10" y="9.2" width="4.6" height="4.6"/><rect x="10" y="18.4" width="4.6" height="4.6"/></g><g fill="#4caa5a"><rect x="20" y="0" width="4.6" height="4.6"/><rect x="20" y="9.2" width="4.6" height="4.6"/><rect x="20" y="18.4" width="4.6" height="4.6"/></g></svg>
<div class="t" style="left:1527px;top:314.3px;font-size:6.4px;line-height:9px;letter-spacing:.2px;color:#66666a;--w:41.5;--k:1.0894">Indonesia<b style="color:#454547">Re</b></div>
<div class="t" style="left:1536px;top:321.4px;font-size:3.6px;line-height:5px;letter-spacing:2.2px;color:#555;--w:33;--k:1.0188">Institute</div>
<svg class="abs" style="left:1537px;top:324px" width="24" height="7" viewBox="0 0 24 7"><path d="M1.6 4.9 Q1.2 5.8 2.6 5.6 Q11 3 21.6 1.8 Q11 2.3 1.6 4.9Z" fill="#e0303e"/></svg>
<!-- headline texts -->
<div class="t" style="left:1163.6px;top:358.1px;font-size:7.2px;line-height:10px;font-weight:bold;color:#22242c;-webkit-text-stroke:.2px #22242c;--w:147.6;--k:0.9935">iLearn Coding/Corporate Learning Program</div>
<div class="t" id="amt" style="left:1162.2px;top:369.1px;font-size:18.6px;line-height:27px;font-weight:bold;color:#10296b;-webkit-text-stroke:1.3px #10296b;letter-spacing:.6px;--w:314.5;--k:1.0862">ADVANCE MEDICAL TRAINING</div>
<div class="t" style="left:1163px;top:396px;font-family:'Liberation Serif',serif;font-style:italic;font-size:12.5px;line-height:16px;color:#333;--w:13.5;--k:0.7200">For</div>
<div class="t" style="left:1180px;top:399.5px;font-size:7.8px;line-height:12px;font-weight:bold;color:#1a1c24;-webkit-text-stroke:.25px #1a1c24;--w:29;--k:0.9841">BNI Life</div>
<svg class="abs" style="left:1280px;top:350px" width="240" height="210" viewBox="0 0 1029 900">
<defs>
<filter id="b6" x="-20%" y="-20%" width="140%" height="140%"><feGaussianBlur stdDeviation="6"/></filter>
<filter id="b12" x="-30%" y="-30%" width="160%" height="160%"><feGaussianBlur stdDeviation="12"/></filter>
<filter id="b3" x="-20%" y="-20%" width="140%" height="140%"><feGaussianBlur stdDeviation="3"/></filter>
<radialGradient id="skin" cx=".45" cy=".45" r=".65"><stop offset="0" stop-color="#ecc7b1"/><stop offset=".6" stop-color="#e2b39b"/><stop offset="1" stop-color="#cf9a84"/></radialGradient>
<linearGradient id="hij" x1="0" y1="0" x2="1" y2="0"><stop offset="0" stop-color="#cdccd0"/><stop offset=".35" stop-color="#dddce0"/><stop offset=".75" stop-color="#d6d5d9"/><stop offset="1" stop-color="#c9c8cc"/></linearGradient>
<clipPath id="vc"><rect x="-200" y="-100" width="1500" height="987"/></clipPath>
</defs>
<g clip-path="url(#vc)">
<g filter="url(#b3)">
<!-- cardigan -->
<path d="M20 900 Q30 760 56 700 Q90 640 210 606 L300 900Z" fill="#dfddd0"/>
<path d="M690 586 Q800 630 880 740 Q930 820 945 900 H680Z" fill="#ebebe8"/>
<!-- hijab -->
<path d="M400 98 Q330 100 290 170 Q250 250 250 400 Q255 500 275 530 Q200 620 182 720 Q178 820 192 900 H740 Q735 760 700 620 Q640 470 622 380 Q610 230 560 160 Q500 92 400 98Z" fill="url(#hij)"/>
<path d="M300 560 Q380 640 410 600 Q500 560 560 470 Q600 600 640 900 H360 Q350 760 300 560Z" fill="#e4e3e7"/>
<path d="M560 180 Q600 260 590 400" fill="none" stroke="#a9a8b0" stroke-width="10" opacity=".7"/>
</g>
<!-- face -->
<g filter="url(#b6)">
<path d="M400 140 Q290 150 262 300 Q240 430 300 540 Q360 600 410 596 Q480 580 530 480 Q565 380 548 280 Q520 150 400 140Z" fill="url(#skin)"/>
</g>
<g filter="url(#b12)">
<ellipse cx="300" cy="420" rx="34" ry="60" fill="#d39a86" opacity=".55"/>
<ellipse cx="510" cy="410" rx="30" ry="70" fill="#d39a86" opacity=".55"/>
<path d="M290 180 Q400 130 520 185" stroke="#c9927c" stroke-width="26" fill="none" opacity=".5"/>
<ellipse cx="400" cy="560" rx="70" ry="22" fill="#cf9782" opacity=".5"/>
</g>
<g filter="url(#b6)">
<ellipse cx="312" cy="292" rx="34" ry="13" fill="#5a3a30" opacity=".8"/>
<ellipse cx="466" cy="294" rx="34" ry="13" fill="#5a3a30" opacity=".8"/>
<path d="M270 250 Q310 236 352 250" stroke="#8a6654" stroke-width="9" fill="none" opacity=".55"/>
<path d="M428 252 Q470 238 512 256" stroke="#8a6654" stroke-width="9" fill="none" opacity=".55"/>
<path d="M352 396 Q380 412 414 396" stroke="#b47c68" stroke-width="12" fill="none" opacity=".7"/>
<path d="M372 310 Q360 370 366 396" stroke="#f3d5c3" stroke-width="14" fill="none" opacity=".8"/>
<ellipse cx="372" cy="468" rx="64" ry="17" fill="#a8524e" opacity=".9"/>
<ellipse cx="368" cy="466" rx="40" ry="7" fill="#f4ece8"/>
</g>
<path d="M300 548 Q318 640 322 700 Q330 800 352 900" fill="none" stroke="#3a3d4a" stroke-width="5" opacity=".85"/>
<ellipse cx="327" cy="720" rx="7" ry="22" fill="#2c2f3c" opacity=".9"/>
</g>
</svg>
<!-- bottom texts -->
<div class="t" style="left:1183px;top:524.6px;font-size:6.6px;line-height:9px;color:#3a3a40;letter-spacing:.1px;--w:69.5;--k:0.8176">INDONESIA RE INSTITUTE</div>
<div class="t" style="left:1183px;top:534.6px;font-size:6.6px;line-height:9px;color:#55555c;--w:57;--k:0.9656">18 - 20 August 2025</div>
<div class="abs" style="left:1162.6px;top:526px;width:17px;height:17px;border-radius:50%;background:#0d0d0f"></div>
<svg class="abs" style="left:1166px;top:531px" width="11" height="7" viewBox="0 0 11 7"><rect x="0" y=".6" width="7.2" height="5.6" rx="1.2" fill="#f0f0f0"/><path d="M7.6 2.6 L10.4 .8 V6 L7.6 4.2Z" fill="#f0f0f0"/></svg>
<!-- remove spotlight -->
<svg class="abs" style="left:1165.4px;top:317.6px" width="11" height="12.6" viewBox="0 0 30 30" preserveAspectRatio="none"><path d="M.5 0 H15 Q29 0 29 15 Q29 30 15 30 H.5Z" fill="#0b0b0b"/><path d="M2.5 11.8 Q14 5.500 24.5 9.6 Q26.8 11.8 27.2 15.2 Q19 12.4 10.4 17.4Z" fill="#b8202a"/></svg>
<div class="t" style="left:1178px;top:316.4px;font-size:6.4px;line-height:8px;font-weight:bold;color:#0b0b0b;--w:37.5;--k:1.1994">Danantara</div>
<div class="t" style="left:1178px;top:323.6px;font-size:6.4px;line-height:8px;font-weight:bold;color:#0b0b0b;--w:35;--k:1.1728">Indonesia</div>
<div class="abs" style="left:1147px;top:309px;width:136.5px;height:25px;border-radius:6px;background:rgba(50,50,52,.84)"></div>
<svg class="abs" style="left:1157px;top:312px" width="14" height="16" viewBox="0 0 14 16"><path d="M3.6 1.2 H8.6 L8 2.6 V6.4 L10.6 9.6 H1.6 L4.2 6.4 V2.6Z" fill="#f4f4f4"/><path d="M6.1 9.6 V14.6" stroke="#f4f4f4" stroke-width="1.3" stroke-linecap="round"/><circle cx="10.1" cy="2.6" r="2.1" fill="#f4f4f4" stroke="#3a3a3c" stroke-width=".8"/></svg>
<div class="t" style="left:1176.6px;top:312.5px;font-size:13.5px;line-height:18px;color:#f2f2f2;--w:96.5;--k:0.9251">Remove spotlight</div>
<!-- name tag -->
<div class="abs" style="left:1139px;top:537px;width:125px;height:20px;border-radius:6px;background:rgba(72,72,74,.86)"></div>
<svg class="abs" style="left:1141px;top:539px" width="17" height="15" viewBox="0 0 17 15"><g fill="#f4f4f4"><rect x=".6" y="10" width="2.4" height="4.2" rx=".4"/><rect x="4.6" y="7" width="2.4" height="7.2" rx=".4"/><rect x="8.6" y="3.6" width="2.4" height="10.6" rx=".4"/><rect x="12.6" y=".6" width="2.4" height="13.6" rx=".4"/></g></svg>
<div class="t" style="left:1162.5px;top:538.6px;font-size:13.5px;line-height:18px;color:#f2f2f2;--w:96.5;--k:0.8767">Laras P Sasongko</div>
</div></div>

<!-- annotate button -->
<div class="abs" style="left:27.5px;top:739.5px;width:33px;height:33px;border-radius:50%;background:#222426"></div>
<svg class="abs" style="left:35px;top:746px" width="18" height="20" viewBox="0 0 18 20"><g fill="none" stroke="#2fd08a" stroke-width="1.4" stroke-linejoin="round" stroke-linecap="round"><path d="M3.4 13.6 L3 10.8 L11 2.6 L14.2 5.6 L6.2 13.8Z"/><path d="M9.4 4.4 L12.4 7.4"/><path d="M3 17 H14.6"/></g></svg>
<!-- TOOLBAR -->
<div id="toolbar"><div style="position:absolute;left:0;top:-790px;width:1600px;height:900px">
<svg class="abs" style="left:40px;top:804px" width="30" height="32" viewBox="0 0 30 32"><g fill="none" stroke="#f1f1f1" stroke-width="1.5" stroke-linecap="round"><rect x="10.2" y="4.2" width="7.4" height="16" rx="3.7"/><path d="M6.6 15 V16.4 Q6.6 23.6 13.9 23.6 Q21.2 23.6 21.2 16.4 V15"/><path d="M13.9 23.8 V28.2 M9.6 28.3 H18.4"/></g><path d="M26 4.4 L3 28.6" stroke="#e8235c" stroke-width="2.6" stroke-linecap="round"/></svg>
<svg class="abs" style="left:82.6px;top:817.1px" width="10" height="7" viewBox="0 0 10 7"><path d="M2 5.3 L5 2.3 L8 5.3" fill="none" stroke="#ececec" stroke-width="1.5" stroke-linecap="round" stroke-linejoin="round"/></svg>
<div class="t lb" style="left:37.5px;top:838.8px;--w:33.5;--k:1.1202">Audio</div>
<svg class="abs" style="left:136px;top:811px" width="30" height="20" viewBox="0 0 30 20"><g fill="none" stroke="#f1f1f1" stroke-width="1.5" stroke-linejoin="round"><rect x="2.2" y="2.8" width="16.2" height="14.6" rx="3.4"/><path d="M20.6 8.2 L27 4.8 V15.8 L20.6 12.2Z"/></g></svg>
<svg class="abs" style="left:184.7px;top:817.1px" width="10" height="7" viewBox="0 0 10 7"><path d="M2 5.3 L5 2.3 L8 5.3" fill="none" stroke="#ececec" stroke-width="1.5" stroke-linecap="round" stroke-linejoin="round"/></svg>
<div class="t lb" style="left:135.2px;top:838.8px;--w:32.1;--k:1.0813">Video</div>
<svg class="abs" style="left:457px;top:809px" width="24" height="24" viewBox="0 0 24 24"><g fill="none" stroke="#f1f1f1" stroke-width="1.5" stroke-linejoin="round"><circle cx="8.2" cy="5.6" r="2.5"/><path d="M9.4 20.2 H5 Q2.8 20.2 2.8 17.6 Q2.8 11.2 8.2 11.2 Q9.6 11.2 10.6 11.8"/><circle cx="15.6" cy="8.8" r="3"/><rect x="10.2" y="14.8" width="10.8" height="6.4" rx="3.2"/></g></svg>
<div class="t" style="left:486.2px;top:811.6px;font-size:12.4px;line-height:16px;color:#bdbdbd;--w:12.7;--k:0.9205">72</div>
<svg class="abs" style="left:519.3px;top:817.1px" width="10" height="7" viewBox="0 0 10 7"><path d="M2 5.3 L5 2.3 L8 5.3" fill="none" stroke="#ececec" stroke-width="1.5" stroke-linecap="round" stroke-linejoin="round"/></svg>
<div class="t lb" style="left:435.5px;top:838.8px;--w:66.5;--k:1.0888">Participants</div>
<svg class="abs" style="left:569px;top:807px" width="26" height="27" viewBox="0 0 26 27"><g fill="none" stroke="#f1f1f1" stroke-width="1.5" stroke-linejoin="round"><path d="M9 5.4 Q9.6 3.4 12.2 3.4 H19.4 Q22 3.4 22.2 6.2 V12.6 Q22 14.6 20.4 15"/><path d="M6 7.6 H18.4 Q21.4 7.6 21.4 10.6 V17.4 Q21.4 20.4 18.4 20.4 H11.6 L7.4 24.2 V20.4 H6 Q3 20.4 3 17.4 V10.6 Q3 7.6 6 7.6Z" fill="#4a4a4a"/></g><circle cx="8.4" cy="14" r="1.15" fill="#f1f1f1"/><circle cx="12.2" cy="14" r="1.15" fill="#f1f1f1"/><circle cx="16" cy="14" r="1.15" fill="#f1f1f1"/></svg>
<div class="abs" style="left:587.4px;top:805.5px;width:16.4px;height:16.4px;border-radius:50%;background:#e22c2e"></div>
<div class="t" style="left:592.4px;top:806.7px;font-size:11.5px;line-height:14px;font-weight:bold;color:#fff;--w:6.2;--k:0.9678">1</div>
<svg class="abs" style="left:612.9px;top:817.1px" width="10" height="7" viewBox="0 0 10 7"><path d="M2 5.3 L5 2.3 L8 5.3" fill="none" stroke="#ececec" stroke-width="1.5" stroke-linecap="round" stroke-linejoin="round"/></svg>
<div class="t lb" style="left:571.1px;top:838.8px;--w:25.4;--k:1.0282">Chat</div>
<svg class="abs" style="left:657px;top:807px" width="30" height="28" viewBox="0 0 30 28"><path d="M14.8 24.4 Q3.4 17.4 3.4 10.2 Q3.6 4.4 8.8 4.2 Q12.6 4.2 14.8 8 Q17 4.2 20.8 4.2 Q26 4.4 26.2 10.2 Q26.2 17.4 14.8 24.4Z" fill="none" stroke="#f1f1f1" stroke-width="1.5" stroke-linejoin="round"/></svg>
<div class="t lb" style="left:656.9px;top:838.8px;--w:30.1;--k:0.9854">React</div>
<div class="abs" style="left:752px;top:810.8px;width:25.5px;height:20.2px;border-radius:3.5px;background:#22e07c"></div>
<svg class="abs" style="left:757px;top:813px" width="16" height="16" viewBox="0 0 16 16"><path d="M7.8 13.2 V4 M3.4 8 L7.8 3.4 L12.2 8" fill="none" stroke="#0b3b22" stroke-width="2.3" stroke-linejoin="miter"/></svg>
<svg class="abs" style="left:798.2px;top:817.1px" width="10" height="7" viewBox="0 0 10 7"><path d="M2 5.3 L5 2.3 L8 5.3" fill="none" stroke="#ececec" stroke-width="1.5" stroke-linecap="round" stroke-linejoin="round"/></svg>
<div class="t lb" style="left:749.0px;top:838.8px;--w:31.2;--k:0.9999">Share</div>
<svg class="abs" style="left:845px;top:808px" width="25" height="26" viewBox="0 0 25 26"><path d="M12.5 3.2 Q16.4 5.6 21.6 5.8 Q22.2 17.4 12.5 22.8 Q2.8 17.4 3.4 5.8 Q8.6 5.6 12.5 3.2Z" fill="none" stroke="#f1f1f1" stroke-width="1.5" stroke-linejoin="round"/><path d="M12.5 5.6 V12.6 H5.8 Q5.4 9.6 5.6 7.6 Q9.6 7.2 12.5 5.6Z M12.5 12.6 H19.2 Q18 17.6 12.5 20.6Z" fill="#f1f1f1"/></svg>
<div class="t lb" style="left:829.0px;top:838.8px;--w:57.0;--k:1.0968">Host tools</div>
<svg class="abs" style="left:933px;top:806px" width="30" height="29" viewBox="0 0 30 29"><defs><linearGradient id="aig" x1="0" y1="0" x2="1" y2="1"><stop offset="0" stop-color="#eaf6f8"/><stop offset=".55" stop-color="#b6dce8"/><stop offset="1" stop-color="#e2f2f6"/></linearGradient></defs><path d="M14.6 5 Q16.8 12.8 25.4 15.2 Q16.8 17.6 14.6 25.6 Q12.4 17.6 3.8 15.2 Q12.4 12.8 14.6 5Z" fill="url(#aig)" stroke="url(#aig)" stroke-width="1.2" stroke-linejoin="round"/><path d="M23.4 2.4 Q23.8 5.4 27.2 6.2 Q23.8 7 23.4 10 Q23 7 19.6 6.2 Q23 5.4 23.4 2.4Z" fill="#d8eef4"/></svg>
<div class="t lb" style="left:907.9px;top:838.8px;--w:81.2;--k:1.0961">AI Companion</div>
<svg class="abs" style="left:1026px;top:807px" width="28" height="28" viewBox="0 0 28 28"><g fill="none" stroke="#f1f1f1" stroke-width="1.5" stroke-linecap="round"><path d="M3.2 12.6 V8.2 Q3.2 4 7.4 4 H11.8"/><circle cx="20.2" cy="7.2" r="3.7"/><circle cx="7.2" cy="20.4" r="3.7"/><path d="M15.8 23.8 H20.2 Q24.4 23.8 24.4 19.6 V15.4"/></g></svg>
<svg class="abs" style="left:1063.6px;top:817.1px" width="10" height="7" viewBox="0 0 10 7"><path d="M2 5.3 L5 2.3 L8 5.3" fill="none" stroke="#ececec" stroke-width="1.5" stroke-linecap="round" stroke-linejoin="round"/></svg>
<div class="t lb" style="left:1025.8px;top:838.8px;--w:27.1;--k:1.0172">Apps</div>
<svg class="abs" style="left:1124px;top:807px" width="54" height="28" viewBox="0 0 54 28"><g fill="none" stroke="#f1f1f1" stroke-width="1.5"><rect x="2.2" y="2.6" width="22.4" height="22.4" rx="5"/><rect x="28" y="2.6" width="22.4" height="22.4" rx="5"/></g><rect x="9.2" y="9.4" width="2.8" height="8.8" rx=".8" fill="#f1f1f1"/><rect x="15.6" y="9.4" width="2.8" height="8.8" rx=".8" fill="#f1f1f1"/><rect x="34.6" y="9.4" width="9.4" height="8.8" rx="2" fill="#f1f1f1"/></svg>
<div class="t lb" style="left:1090.5px;top:839.8px;--w:119.9;--k:1.0855">Pause/stop recording</div>
<svg class="abs" style="left:1250px;top:806.6px" width="28" height="28" viewBox="0 0 28 28"><circle cx="14.3" cy="14" r="11.4" fill="none" stroke="#f1f1f1" stroke-width="1.5"/><circle cx="9.3" cy="14" r="1.3" fill="#f1f1f1"/><circle cx="14.3" cy="14" r="1.3" fill="#f1f1f1"/><circle cx="19.3" cy="14" r="1.3" fill="#f1f1f1"/></svg>
<div class="t lb" style="left:1249.8px;top:838.8px;--w:29.2;--k:1.0961">More</div>
<svg class="abs" style="left:1535px;top:805px" width="32" height="30" viewBox="0 0 32 30"><g fill="none" stroke="#e4105c" stroke-width="1.5" stroke-linejoin="round"><path d="M10.6 4.2 H27 L28 5.4 V23.4"/><path d="M19.6 8.4 L25.6 5.6 V24.4 L19.6 27.2Z" fill="rgba(228,16,92,.25)"/></g><g fill="#4a4a4a" stroke="#fafafa" stroke-width="1.5" stroke-linejoin="round" stroke-linecap="round"><circle cx="11.8" cy="9.4" r="3"/><path d="M10.4 13.2 Q12.2 12.6 13.4 13.6 L16.4 17 L15.4 18.2 L13.4 16.6 L13.6 19.6 L14.6 26.4 H12.2 L10.8 21.6 L6.4 26.6 L4.2 26.4 L4.4 24.8 L7.8 20.4 L7.8 16.4 L5.2 18.2 L4.2 16.8 Q6.6 13.8 10.4 13.2Z"/></g></svg>
<div class="t lb" style="left:1534.7px;top:838.8px;--w:31.3;--k:0.9824">Leave</div>
</div></div>

<!-- TASKBAR -->
<div id="taskbar"><div style="position:absolute;left:0;top:-857px;width:1600px;height:900px">
<!-- start -->
<svg class="abs" style="left:16px;top:870px" width="18" height="18" viewBox="0 0 18 18"><path d="M.3 2.9 L7.6 1.9 V8.5 H.3Z M8.5 1.8 L17.7 .5 V8.5 H8.5Z M.3 9.4 H7.6 V16 L.3 15Z M8.5 9.4 H17.7 V17.5 L8.5 16.2Z" fill="#0a0a0a"/></svg>
<!-- search -->
<div class="abs" style="left:51.3px;top:859.5px;width:297.5px;height:38px;background:#fcfcfc"></div>
<svg class="abs" style="left:61px;top:866px" width="26" height="26" viewBox="0 0 26 26"><circle cx="15.3" cy="10.4" r="6.4" fill="none" stroke="#1c1c1c" stroke-width="1.6"/><path d="M10.8 15.2 L3.2 22.6" stroke="#1c1c1c" stroke-width="1.8" stroke-linecap="round"/></svg>
<div class="t" style="left:97px;top:869.8px;font-size:17.5px;line-height:22px;color:#3c3c3c;--w:135;--k:0.8728">Type here to search</div>
<svg class="abs" style="left:272px;top:862px" width="72" height="34" viewBox="0 0 72 34"><defs><linearGradient id="gld" x1="0" y1="0" x2="1" y2="1"><stop offset="0" stop-color="#ffd75a"/><stop offset="1" stop-color="#f5a416"/></linearGradient></defs><path d="M28 4.6 Q30.6 13.8 40.4 16.8 Q30.6 19.8 28 29 Q25.4 19.8 15.6 16.8 Q25.4 13.8 28 4.6Z" fill="url(#gld)" stroke="url(#gld)" stroke-width="1.6" stroke-linejoin="round"/><path d="M51.8 14 Q53 18.6 57.6 20 Q53 21.4 51.8 26 Q50.6 21.4 46 20 Q50.6 18.6 51.8 14Z" fill="url(#gld)" stroke="url(#gld)" stroke-width="1" stroke-linejoin="round"/><path d="M8.4 21 Q9.4 24 12.2 25 Q9.4 26 8.4 29 Q7.4 26 4.6 25 Q7.4 24 8.4 21Z" fill="#2f9bea" stroke="#2f9bea" stroke-width=".8" stroke-linejoin="round" transform="rotate(12 8.4 25)"/><circle cx="45.6" cy="6" r="1.7" fill="#e8693a"/><circle cx="64.4" cy="26.4" r="1.7" fill="#7bc043"/></svg>
<!-- task view -->
<svg class="abs" style="left:365px;top:870px" width="20" height="19" viewBox="0 0 20 19"><g fill="none" stroke="#1e1e1e" stroke-width="1.4"><rect x="3.6" y="4.6" width="9.6" height="8.8"/><path d="M1.4 2.2 V4.6 H15.4 V2.2 M1.4 16 V13.4 H15.4 V16"/><path d="M18.4 2.2 V8 M18.4 11 V16.6"/></g></svg>
<!-- explorer -->
<svg class="abs" style="left:416px;top:868px" width="25" height="21" viewBox="0 0 25 21"><path d="M1.2 2.4 Q1.2 1.4 2.2 1.4 H8.6 L10.8 3.6 H22.8 Q23.8 3.6 23.8 4.6 V7 H1.2Z" fill="#f4b73a"/><path d="M1.2 6 H23.8 V18.6 Q23.8 19.6 22.8 19.6 H2.2 Q1.2 19.6 1.2 18.6Z" fill="#fbd45f"/><path d="M5.6 19.6 V12.6 Q5.6 11.8 6.4 11.8 H18.6 Q19.4 11.8 19.4 12.6 V19.6 H16 V15 H9 V19.6Z" fill="#3f8fd8"/></svg>
<div class="abs" style="left:408px;top:897.6px;width:41.3px;height:2.4px;background:#0b74d0"></div>
<!-- zoom -->
<div class="abs" style="left:455px;top:857px;width:47px;height:43px;background:#ececec"></div>
<div class="abs" style="left:503.4px;top:859px;width:1px;height:39px;background:#c4c4c4"></div>
<div class="abs" style="left:467.4px;top:866.6px;width:25px;height:25px;border-radius:10px;background:#0b5cff"></div>
<div class="t" style="left:471.6px;top:873.2px;font-size:7.4px;line-height:10px;font-weight:bold;color:#fff;--w:16.6;--k:0.8602">zoom</div>
<div class="abs" style="left:455px;top:897.6px;width:47px;height:2.4px;background:#0b74d0"></div>
<!-- drive -->
<svg class="abs" style="left:519px;top:867px" width="26" height="23" viewBox="0 0 26 23"><path d="M9.2 1.6 H16.8 L25 16 H17.4Z" fill="#fbbc04"/><path d="M9.2 1.6 L1 16 L4.8 22 L13 7.6Z" fill="#1fa463"/><path d="M8.6 16 H25 L21.2 22 H4.8Z" fill="#4285f4"/><path d="M17.4 16 H25 L21.2 22Z" fill="#ea4335"/></svg>
<!-- firefox -->
<svg class="abs" style="left:571px;top:866px" width="26" height="26" viewBox="0 0 26 26"><defs><radialGradient id="ffx" cx=".7" cy=".2" r=".9"><stop offset="0" stop-color="#fff36c"/><stop offset=".35" stop-color="#ff9a1f"/><stop offset=".75" stop-color="#f0353f"/><stop offset="1" stop-color="#d8206a"/></radialGradient></defs><circle cx="12.8" cy="13.6" r="11.2" fill="url(#ffx)"/><path d="M16.6 1.2 Q19 4 18.4 7 Q22 9 22.6 13 Q20 8 16 8.6 Q17.4 5 16.6 1.2Z" fill="#ffbd2e"/><circle cx="12.6" cy="14.6" r="5.6" fill="#7a3fd0"/><path d="M6.2 12 Q10 9.4 14 11.6 Q11 12.6 11.4 15.2 Q8 15.6 6.2 12Z" fill="#ff8a2a"/></svg>
<!-- outlook tile -->
<div class="abs" style="left:610px;top:857px;width:50px;height:43px;background:#f6ab70"></div>
<div class="abs" style="left:655.6px;top:857px;width:1px;height:40px;background:#f9c596"></div>
<div class="abs" style="left:610px;top:897.4px;width:50px;height:2.6px;background:#ef7a1a"></div>
<svg class="abs" style="left:622px;top:867px" width="28" height="25" viewBox="0 0 28 25"><rect x="8.6" y="1" width="16.4" height="15" rx="1.2" fill="#1a8ad8"/><rect x="8.6" y="1" width="8.2" height="7.4" fill="#0f62b2"/><rect x="16.8" y="1" width="8.2" height="7.4" fill="#2fa6ec"/><rect x="8.6" y="8.4" width="8.2" height="7.6" fill="#1478c8"/><rect x="16.8" y="8.4" width="8.2" height="7.6" fill="#1590e0"/><rect x=".6" y="5.4" width="12.4" height="12.4" rx="1.4" fill="#0d5fb4"/><circle cx="6.8" cy="11.6" r="3.1" fill="none" stroke="#fff" stroke-width="1.6"/><path d="M12.8 16.6 H26.6 V23 Q26.6 24 25.6 24 H13.8 Q12.8 24 12.8 23Z" fill="#f4d7b4"/><path d="M13.4 17 L19.8 21.4 L26.2 17" fill="none" stroke="#fff" stroke-width="1.3"/></svg>
<!-- teams -->
<svg class="abs" style="left:672px;top:866px" width="28" height="26" viewBox="0 0 28 26"><circle cx="22.6" cy="6.6" r="2.8" fill="#5059c9"/><circle cx="15.4" cy="5" r="3.8" fill="#7b83eb"/><path d="M18.6 10 H26 Q27 10 27 11 V17.6 Q27 21.6 23 21.6 Q20 21.6 18.6 19Z" fill="#5059c9"/><path d="M9 10 H20.6 Q21.6 10 21.6 11 V18.6 Q21.6 24.6 15.2 24.6 Q9 24.6 9 18.6Z" fill="#7b83eb"/><rect x="1" y="6.4" width="13.6" height="13.6" rx="1.4" fill="#4b53bc"/><path d="M4.6 10 H11 M7.8 10 V17" stroke="#fff" stroke-width="1.7"/></svg>
<!-- edge -->
<svg class="abs" style="left:725px;top:866px" width="27" height="27" viewBox="0 0 27 27"><defs><linearGradient id="edg" x1="0" y1=".6" x2="1" y2=".2"><stop offset="0" stop-color="#1673d0"/><stop offset=".45" stop-color="#2aa8d8"/><stop offset=".8" stop-color="#45cf8c"/><stop offset="1" stop-color="#6bdc5a"/></linearGradient></defs><path d="M13.5 1 Q22 1 25.2 8.6 Q27 14.6 22.6 16.6 H15.4 Q13.4 14.6 15 12.2 Q9.6 9.6 6.2 15 Q4.4 21 9.6 25 Q1.2 22 1.3 13.2 Q2 2 13.5 1Z" fill="url(#edg)"/><path d="M1.4 13.6 Q3 7 9.6 7.4 Q13.6 8 15 12.2 Q10.8 11.4 9.4 15.4 Q9 20.6 14.4 22 Q19.6 22.6 23.6 19 Q20.6 25.6 13.4 25.6 Q2.4 24.6 1.4 13.6Z" fill="#0f4f9e"/><path d="M9.4 15.4 Q10.4 11.6 14.4 12 Q13.4 14.6 15.4 16.6 Q14 18.6 15.6 20.4 Q17 22.6 14.4 22 Q9 20.6 9.4 15.4Z" fill="#1b63b4"/></svg>
<div class="abs" style="left:717.6px;top:897.6px;width:41.4px;height:2.4px;background:#0b74d0"></div>
<!-- chrome -->
<svg class="abs" style="left:777px;top:866px" width="30" height="30" viewBox="0 0 30 30"><circle cx="12.8" cy="12.6" r="12" fill="#fff"/><path d="M12.8 12.6 L2.4 6.6 A12 12 0 0 1 23.2 6.6Z" fill="#e33b2e"/><path d="M12.8 12.6 L23.2 6.6 A12 12 0 0 1 12.8 24.6Z" fill="#fbc116"/><path d="M12.8 12.6 L12.8 24.6 A12 12 0 0 1 2.4 6.6Z" fill="#2ba24c"/><circle cx="12.8" cy="12.6" r="5.6" fill="#fff"/><circle cx="12.8" cy="12.6" r="4.4" fill="#3d7de6"/><circle cx="19.6" cy="20.2" r="7" fill="#3f78d8" stroke="#dcdcdc" stroke-width="1.2"/><circle cx="19.6" cy="18.6" r="2.2" fill="none" stroke="#fff" stroke-width="1.2"/><path d="M15.6 24 Q16.2 21.6 19.6 21.6 Q23 21.6 23.6 24" fill="none" stroke="#fff" stroke-width="1.2"/></svg>
<div class="abs" style="left:768.8px;top:897.6px;width:42px;height:2.4px;background:#0b74d0"></div>
<!-- tray -->
<svg class="abs" style="left:1293px;top:872px" width="17" height="12" viewBox="0 0 17 12"><path d="M2 9.6 L8.5 3 L15 9.6" fill="none" stroke="#2a2a2a" stroke-width="1.3"/></svg>
<svg class="abs" style="left:1327px;top:869px" width="15" height="20" viewBox="0 0 15 20"><rect x="4.4" y="1.6" width="6.2" height="11.6" rx="3.1" fill="#1e1e1e"/><path d="M2.2 9.6 V10.6 Q2.2 15.4 7.5 15.4 Q12.8 15.4 12.8 10.6 V9.6" fill="none" stroke="#3a3a3a" stroke-width="1.2"/><path d="M7.5 15.4 V18 M4.6 18.2 H10.4" stroke="#3a3a3a" stroke-width="1.2"/></svg>
<svg class="abs" style="left:1357px;top:869px" width="22" height="20" viewBox="0 0 22 20"><path d="M2.2 3.6 L18.6 2.2 V14.6 L2.2 16Z" fill="none" stroke="#2a2a2a" stroke-width="1.3" stroke-linejoin="round"/><path d="M7.4 7.4 Q10 5.2 12.8 7 M13 10.6 Q10.4 12.8 7.6 11" fill="none" stroke="#2a2a2a" stroke-width="1.2"/><path d="M12.9 5 V7.2 H10.8 M7.5 13 V10.8 H9.6" fill="none" stroke="#2a2a2a" stroke-width="1.1"/><circle cx="15.6" cy="15" r="3.7" fill="#2b7fd4"/></svg>
<svg class="abs" style="left:1395px;top:869px" width="22" height="21" viewBox="0 0 22 21"><g fill="none" stroke="#2a2a2a" stroke-width="1.4" stroke-linecap="round" stroke-linejoin="round"><path d="M6.6 15.4 L12.4 3.6 Q13.6 1.8 15.4 2.8 Q17 4 16 5.8 L10.2 17Z"/><path d="M7.6 13.4 Q3 12.6 2.4 15.6 Q2.4 18.6 6 18.4 Q8.6 18 10.2 15.6 Q13 10.6 18.8 10.4"/></g></svg>
<svg class="abs" style="left:1437px;top:871px" width="20" height="17" viewBox="0 0 20 17"><g fill="none" stroke="#2a2a2a" stroke-width="1.3"><rect x="2" y="1.6" width="15.6" height="13" rx=".6"/><path d="M2 10.2 H17.6 M9.8 10.2 V14.6"/></g></svg>
<div class="t" style="left:1491.7px;top:862.6px;font-size:12px;line-height:16px;color:#1e1e1e;--w:29;--k:0.9952">11:33</div>
<div class="t" style="left:1474.6px;top:881.8px;font-size:12px;line-height:16px;color:#1e1e1e;--w:63;--k:1.0489">21/08/2025</div>
<svg class="abs" style="left:1556px;top:869px" width="28" height="28" viewBox="0 0 28 28"><path d="M1.4 2 H18.2 V14.4 H7.2 L4 17.6 V14.4 H1.4Z" fill="#111"/><path d="M4.4 5.4 H15.2 M4.4 8.2 H15.2 M4.4 11 H11.6" stroke="#dcdcdc" stroke-width="1.1"/><circle cx="16.4" cy="18" r="7.6" fill="#e4e4e4" stroke="#3c3c3c" stroke-width="1"/></svg>
<div class="t" style="left:1569.2px;top:879.6px;font-size:11.5px;line-height:14px;font-weight:bold;color:#1c1c1c;--w:6.6;--k:1.0302">7</div>
<div class="abs" style="left:1595.4px;top:859px;width:1px;height:41px;background:#bdbdbd"></div>
</div></div>

</div>
</body>
</html>
